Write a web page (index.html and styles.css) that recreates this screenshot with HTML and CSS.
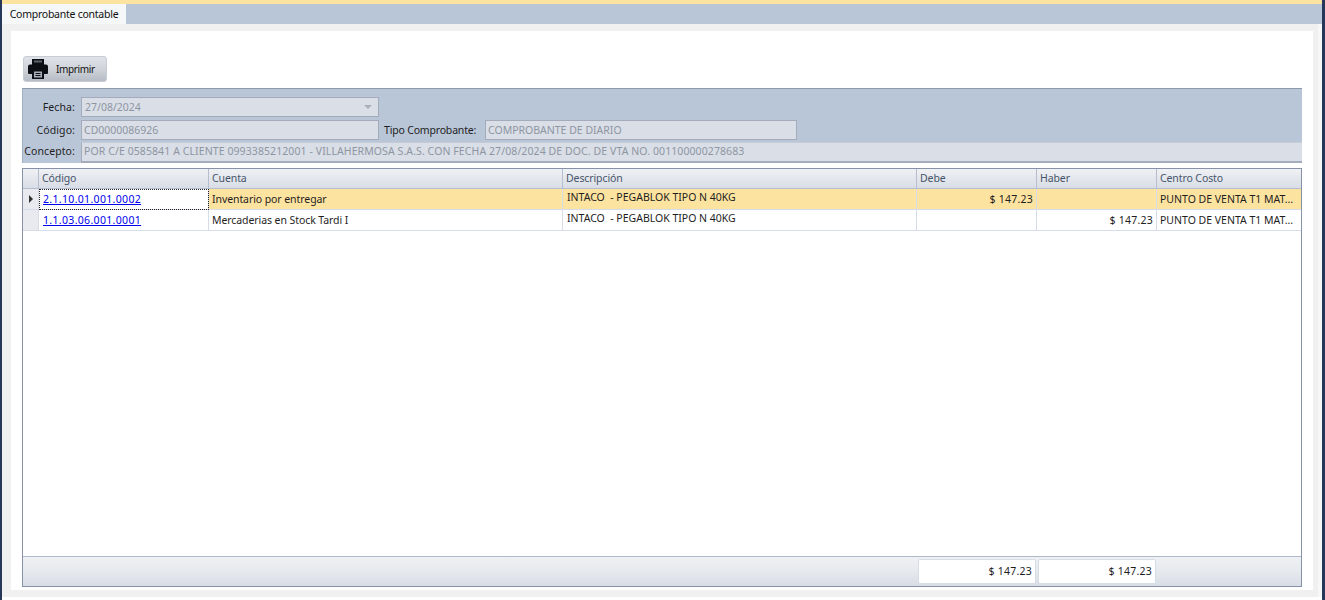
FILE: index.html
```html
<!DOCTYPE html>
<html lang="en">
<head>
    <title>Comprobante contable</title>
    <link rel="stylesheet" href="styles.css">
</head>
<body>
    <div class="top_band"></div>
    <div class="tab_strip">
        <div class="tab">Comprobante contable</div>
    </div>
    <div class="tab_page">
        <div class="content">
            <button type="button" class="print_button">
                <svg class="print_icon" width="20" height="20" viewBox="0 0 20 20">
                    <path fill="#0c0f14" d="M4 0h12v7H4z"/>
                    <path fill="#5d636c" d="M6 1.500h8v2H6z"/>
                    <path fill="#0c0f14" d="M2 5.500h16a2 2 0 0 1 2 2V14a1 1 0 0 1-1 1h-3.500v-4h-11v4H1a1 1 0 0 1-1-1V7.500a2 2 0 0 1 2-2z"/>
                    <path fill="#0c0f14" d="M4 11h12v9H4z"/>
                    <path fill="#a9afb8" d="M6 12.500h8v6H6z"/>
                    <path fill="#0c0f14" d="M7.500 14h5v1h-5zM7.500 16h5v1h-5z"/>
                </svg>
                <span>Imprimir</span>
            </button>
            <div class="group">
                <div class="form_row">
                    <label class="form_label">Fecha:</label>
                    <div class="input combo">27/08/2024<span class="combo_arrow"></span></div>
                </div>
                <div class="form_row">
                    <label class="form_label">Código:</label>
                    <div class="input code_input">CD0000086926</div>
                    <label class="type_label">Tipo Comprobante:</label>
                    <div class="input type_input">COMPROBANTE DE DIARIO</div>
                </div>
                <div class="form_row concept_row">
                    <label class="form_label">Concepto:</label>
                    <div class="input concept_input">POR C/E 0585841 A CLIENTE 0993385212001 - VILLAHERMOSA S.A.S. CON FECHA 27/08/2024 DE DOC. DE VTA NO. 001100000278683</div>
                </div>
            </div>
            <div class="grid">
                <div class="grid_row grid_head">
                    <div class="cell indicator"></div>
                    <div class="cell">Código</div>
                    <div class="cell">Cuenta</div>
                    <div class="cell">Descripción</div>
                    <div class="cell">Debe</div>
                    <div class="cell">Haber</div>
                    <div class="cell">Centro Costo</div>
                </div>
                <div class="grid_row selected">
                    <div class="cell indicator"><span class="row_arrow"></span></div>
                    <div class="cell focused"><a href="#">2.1.10.01.001.0002</a></div>
                    <div class="cell account">Inventario por entregar</div>
                    <div class="cell desc">INTACO&nbsp; - PEGABLOK TIPO N 40KG</div>
                    <div class="cell money">$ 147.23</div>
                    <div class="cell money"></div>
                    <div class="cell">PUNTO DE VENTA T1 MAT...</div>
                </div>
                <div class="grid_row">
                    <div class="cell indicator"></div>
                    <div class="cell"><a href="#">1.1.03.06.001.0001</a></div>
                    <div class="cell account">Mercaderias en Stock Tardi I</div>
                    <div class="cell desc">INTACO&nbsp; - PEGABLOK TIPO N 40KG</div>
                    <div class="cell money"></div>
                    <div class="cell money">$ 147.23</div>
                    <div class="cell">PUNTO DE VENTA T1 MAT...</div>
                </div>
                <div class="grid_empty"></div>
                <div class="grid_footer">
                    <div class="total">$ 147.23</div>
                    <div class="total">$ 147.23</div>
                </div>
            </div>
        </div>
    </div>
</body>
</html>
```

FILE: styles.css
```css
html, body {
    margin: 0;
    height: 600px;
    overflow: hidden;
}
body {
    background: #ffffff;
    font-family: "Noto Sans", Tahoma, sans-serif;
    font-size: 10.5px;
    color: #1e1e1e;
    border-left: 2px solid #27375a;
    border-right: 3px solid #27375a;
    display: flex;
    flex-direction: column;
}
.top_band {
    height: 4px;
    margin-left: -2px;
    background: #fde3a0;
    flex: none;
}
.tab_strip {
    height: 20px;
    flex: none;
    display: flex;
    background: #b9c6d8;
}
.tab {
    width: 124px;
    background: #f6f7f8;
    text-align: center;
    line-height: 20px;
    color: #111;
    letter-spacing: -0.25px;
}
.tab_page {
    flex: 1;
    background: #f0f0f0;
    padding: 7px 5px 7px 9px;
    margin-bottom: 3px;
    border-right: 4px solid #f7f7f7;
    min-height: 0;
    display: flex;
}
.content {
    flex: 1;
    background: #ffffff;
    padding: 25px 11px 3px 11px;
    display: flex;
    flex-direction: column;
}
.print_button {
    width: 84px;
    height: 26px;
    margin-left: 1px;
    flex: none;
    display: flex;
    align-items: center;
    gap: 8px;
    padding: 0 0 0 4px;
    border: 1px solid #c6ccd6;
    border-radius: 3px;
    background: linear-gradient(#dfe2e7, #d0d4da 50%, #b6bcc5);
    font: inherit;
    font-size: 10px;
    letter-spacing: -0.35px;
    color: #111;
}
.print_icon {
    flex: none;
}
.group {
    margin-top: 6px;
    height: 75px;
    box-sizing: border-box;
    flex: none;
    background: #b9c6d8;
    border-top: 1px solid #8d99ae;
    border-left: 1px solid #a2aec2;
    padding-top: 8px;
    display: flex;
    flex-direction: column;
    gap: 3px;
}
.form_row {
    display: flex;
    align-items: center;
    height: 20px;
}
.form_label {
    width: 52px;
    text-align: right;
    margin-right: 6px;
    flex: none;
    letter-spacing: 0.1px;
}
.input {
    box-sizing: border-box;
    height: 20px;
    line-height: 18px;
    border: 1px solid #a4acbb;
    background: #d9dee7;
    color: #8e96a2;
    padding-left: 3px;
    position: relative;
    flex: none;
}
.code_input, .type_input {
    padding-left: 2px;
}
.combo, .code_input {
    width: 298px;
}
.combo_arrow {
    position: absolute;
    right: 6px;
    top: 7px;
    border-left: 4px solid transparent;
    border-right: 4px solid transparent;
    border-top: 4px solid #a9b0bc;
}
.type_label {
    margin-left: 5px;
    width: 101px;
    letter-spacing: -0.18px;
}
.type_input {
    width: 312px;
}
.concept_row {
    margin-top: -1px;
    height: 21px;
}
.concept_row .form_label {
    line-height: 19px;
    align-self: flex-start;
}
.concept_input {
    flex: 1;
    height: 21px;
    line-height: 17px;
    padding-left: 2px;
    letter-spacing: 0.09px;
    border-top-color: #c6ccd6;
    border-right: none;
    border-bottom: 2px solid #a4acbb;
}
.grid {
    margin-top: 5px;
    height: 419px;
    box-sizing: border-box;
    flex: none;
    border: 1px solid #8791a8;
    display: flex;
    flex-direction: column;
}
.grid_row {
    display: grid;
    grid-template-columns: 16px 170px 354px 354px 120px 120px 1fr;
    height: 21px;
    flex: none;
}
.cell {
    box-sizing: border-box;
    border-right: 1px solid #d6dce8;
    border-bottom: 1px solid #d6dce8;
    padding-left: 3px;
    line-height: 20px;
    white-space: nowrap;
    overflow: hidden;
}
.cell:last-child {
    border-right: none;
}
.account {
    letter-spacing: -0.08px;
}
.grid_head {
    height: 20px;
    background: linear-gradient(#eff1f4, #e3e6ec 50%, #d8dce5);
    color: #47556c;
    letter-spacing: -0.1px;
}
.grid_head .cell {
    border-right-color: #b5bdcf;
    border-bottom-color: #b5bdcf;
    line-height: 19px;
}
.indicator {
    background: #e8eaef;
    padding: 0;
    display: flex;
    align-items: center;
    justify-content: center;
}
.grid_head .indicator {
    background: none;
}
.row_arrow {
    border-top: 4px solid transparent;
    border-bottom: 4px solid transparent;
    border-left: 4px solid #333;
}
.selected {
    background: #fde3a0;
}
.focused {
    background: #ffffff;
    outline: 1px dotted #222;
    outline-offset: -1px;
}
.grid_row a {
    color: #0000ee;
    padding-left: 1px;
    letter-spacing: 0.33px;
}
.desc {
    line-height: 17px;
    padding-left: 4px;
}
.money {
    text-align: right;
    padding-right: 3px;
    letter-spacing: 0.25px;
}
.grid_empty {
    flex: 1;
}
.grid_footer {
    height: 30px;
    flex: none;
    box-sizing: border-box;
    border-top: 1px solid #b0b8cc;
    background: linear-gradient(#eef0f3, #e6e9ee 50%, #d9dde5);
    display: flex;
    gap: 2px;
    padding: 2px 0 0 895px;
}
.total {
    box-sizing: border-box;
    width: 118px;
    height: 25px;
    line-height: 23px;
    background: #ffffff;
    border: 1px solid #d6dce8;
    border-radius: 2px;
    text-align: right;
    padding-right: 3px;
    letter-spacing: 0.25px;
}
```
